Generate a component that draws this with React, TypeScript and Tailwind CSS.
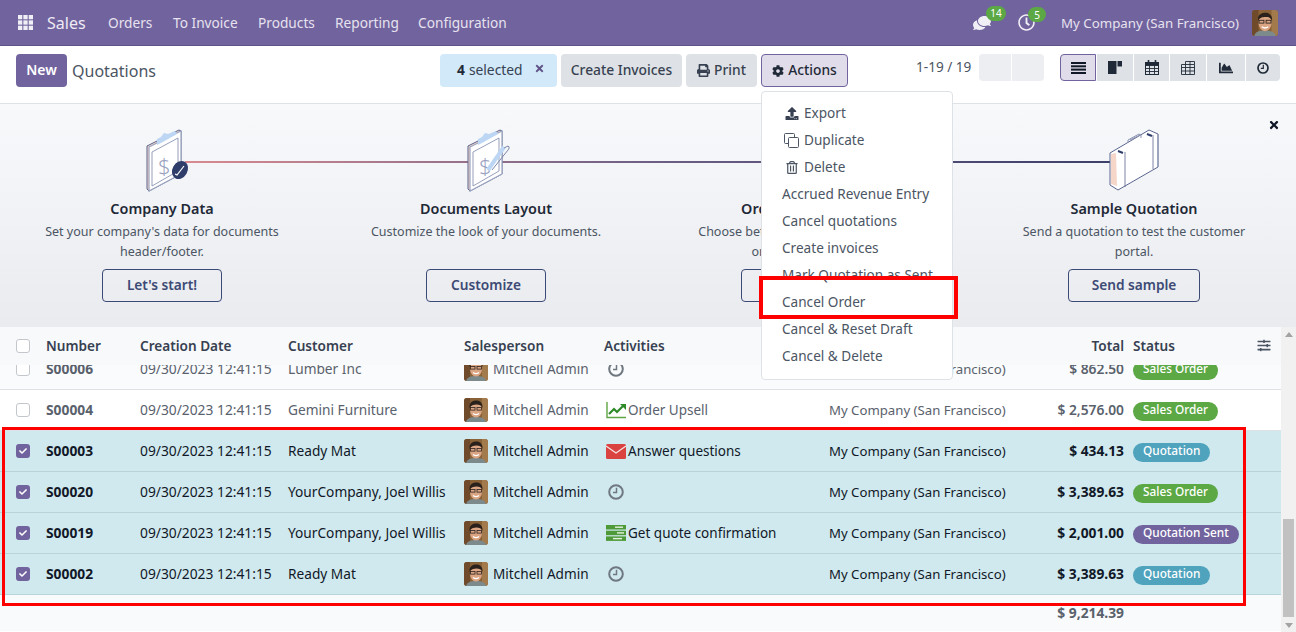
import { FaComments, FaPrint, FaCog, FaUpload, FaRegTrashAlt, FaRegClock, FaSlidersH, FaChartArea, FaTimes, FaCheck } from 'react-icons/fa';

type Row = {
  number: string;
  customer: string;
  activity: 'clock' | 'upsell' | 'mail' | 'todo';
  note?: string;
  total: string;
  status: 'Sales Order' | 'Quotation' | 'Quotation Sent';
  selected?: boolean;
};

const rows: Row[] = [
  { number: 'S00004', customer: 'Gemini Furniture', activity: 'upsell', note: 'Order Upsell', total: '$ 2,576.00', status: 'Sales Order' },
  { number: 'S00003', customer: 'Ready Mat', activity: 'mail', note: 'Answer questions', total: '$ 434.13', status: 'Quotation', selected: true },
  { number: 'S00020', customer: 'YourCompany, Joel Willis', activity: 'clock', total: '$ 3,389.63', status: 'Sales Order', selected: true },
  { number: 'S00019', customer: 'YourCompany, Joel Willis', activity: 'todo', note: 'Get quote confirmation', total: '$ 2,001.00', status: 'Quotation Sent', selected: true },
  { number: 'S00002', customer: 'Ready Mat', activity: 'clock', total: '$ 3,389.63', status: 'Quotation', selected: true },
];

const menuItems = ['Accrued Revenue Entry', 'Cancel quotations', 'Create invoices', 'Mark Quotation as Sent', 'Cancel Order', 'Cancel & Reset Draft', 'Cancel & Delete'];

const gridCols = 'grid grid-cols-[46px_94px_148px_176px_140px_225px_195px_100px_157px] items-center';

function Avatar({ size }: { size: string }) {
  return (
    <svg viewBox="0 0 24 24" className={`${size} rounded-[3px] shrink-0`}>
      <rect width="24" height="24" fill="#8a6238" />
      <rect x="0" y="0" width="6" height="24" fill="#6f4b2b" />
      <rect x="18" y="0" width="6" height="24" fill="#a27a4c" />
      <path d="M2 24c1-4 5-5 10-5s9 1 10 5z" fill="#7d8a8c" />
      <ellipse cx="12" cy="12" rx="6" ry="7.5" fill="#dba583" />
      <path d="M5.5 10C5 4 9 2.5 12.500 2.500S19 5 18.500 10c-1-3-3-3.500-6-3.500S7 7 5.500 10z" fill="#2a211c" />
      <rect x="6.500" y="9.500" width="4.500" height="2.600" fill="none" stroke="#2b2320" strokeWidth=".8" />
      <rect x="13" y="9.500" width="4.500" height="2.600" fill="none" stroke="#2b2320" strokeWidth=".8" />
      <path d="M9 15.500c2 1.500 4 1.500 6 0" stroke="#fff" strokeWidth="1.200" fill="none" />
    </svg>
  );
}

function Checkbox({ checked }: { checked?: boolean }) {
  if (checked) {
    return (
      <span className="flex h-[14px] w-[14px] items-center justify-center rounded-[3px] bg-[#71639e] text-white">
        <FaCheck className="h-[8px] w-[8px]" />
      </span>
    );
  }
  return <span className="block h-[14px] w-[14px] rounded-[3px] border border-[#c3c7cc] bg-white" />;
}

function ActivityIcon({ kind }: { kind: Row['activity'] }) {
  if (kind === 'upsell') {
    return (
      <svg viewBox="0 0 21 18" className="h-[18px] w-[21px]">
        <path d="M1 1v15.500h19" fill="none" stroke="#5ea545" strokeWidth="1.400" />
        <path d="M3 13l5-5 3 3 6-6" fill="none" stroke="#2f8a2a" strokeWidth="2.200" />
        <path d="M14 3h6v6z" fill="#2f8a2a" />
      </svg>
    );
  }
  if (kind === 'mail') {
    return (
      <svg viewBox="0 0 20 15" className="h-[15px] w-[20px]">
        <rect width="20" height="15" rx="1.500" fill="#d9423f" />
        <path d="M0 2l10 7 10-7" fill="none" stroke="#f5e3e3" strokeWidth="1.300" />
      </svg>
    );
  }
  if (kind === 'todo') {
    return (
      <svg viewBox="0 0 20 16" className="h-[16px] w-[20px]">
        <rect width="20" height="4.500" fill="#4f9a38" />
        <rect y="5.700" width="20" height="4.500" fill="#4f9a38" />
        <rect y="11.400" width="20" height="4.500" fill="#4f9a38" />
        <rect x="9" y="1.500" width="8" height="1.400" fill="#e4f1de" />
        <rect x="11" y="7.200" width="7" height="1.400" fill="#e4f1de" />
        <rect x="7" y="12.900" width="9" height="1.400" fill="#e4f1de" />
      </svg>
    );
  }
  return (
    <svg viewBox="0 0 16 16" className="h-[16px] w-[16px]" fill="none" stroke="#6f7780">
      <circle cx="8" cy="8" r="6.800" strokeWidth="2" />
      <path d="M8.500 3.800v4.700H5" strokeWidth="1.500" />
    </svg>
  );
}

function ActivityCell({ kind, note }: { kind: Row['activity']; note?: string }) {
  return (
    <div className="flex items-center whitespace-nowrap">
      <span className="flex w-[24px] shrink-0 justify-center">
        <ActivityIcon kind={kind} />
      </span>
      {note && <span className="text-[13.5px]">{note}</span>}
    </div>
  );
}

function StatusBadge({ status }: { status: Row['status'] }) {
  const color = status === 'Sales Order' ? 'bg-[#5ba845]' : status === 'Quotation' ? 'bg-[#4fa3bd]' : 'bg-[#71639e]';
  return (
    <span className={`inline-flex h-[19px] items-center rounded-full px-[10px] pb-[2px] text-[11.8px] font-medium leading-none text-white ${color}`}>
      {status}
    </span>
  );
}

function Clipboard({ pen, check }: { pen?: boolean; check?: boolean }) {
  return (
    <svg viewBox="0 0 64 66" className="relative h-[66px] w-[64px]">
      <path d="M14 18L46 2l2 1v43L16 63l-2-2z" fill="#f6d6c8" stroke="#56638f" strokeWidth="1" />
      <path d="M16 19L48 3v43L16 63z" fill="#fff" stroke="#9aa3bf" strokeWidth="1.200" />
      <path d="M19 24L45 10v33L19 58z" fill="#fff" stroke="#7b86aa" strokeWidth=".8" />
      <path d="M24 17v-6l4-2 3-4 4 1 7-3 2 3-16 9z" fill="#bcd6f3" />
      <text x="25" y="46" fontSize="22" fontWeight="300" fill="#9aa3bf" fontFamily="'Noto Sans', sans-serif">$</text>
      {pen && (
        <>
          <path d="M34 42L50 19" stroke="#bcd6f3" strokeWidth="4" />
          <path d="M50 20l4-2c2 1 1 3 0 4L38 42" fill="none" stroke="#7b86aa" strokeWidth="1" />
        </>
      )}
      {check && (
        <>
          <ellipse cx="47" cy="42" rx="7.500" ry="9.500" transform="rotate(30 47 42)" fill="#2f3d6b" />
          <path d="M42 46l2 1 7-9" fill="none" stroke="#fff" strokeWidth="1.200" />
        </>
      )}
    </svg>
  );
}

function Briefcase() {
  return (
    <svg viewBox="0 0 64 66" className="relative h-[66px] w-[64px]">
      <path d="M8 25L47 2l9 4v33L16 62l-8-5z" fill="#fff" stroke="#5a6690" strokeWidth="1" />
      <path d="M9 26l5-1 1 33-6-2z" fill="#f6d6c8" />
      <path d="M23 24v35M51 7v34" stroke="#5a6690" strokeWidth=".8" />
      <path d="M26 15v-3l11-6 2 1v3M28 12l10-5" fill="none" stroke="#8b94b3" strokeWidth="1" />
      <path d="M16 23l5 2M45 6l5 2" stroke="#2f3d6b" strokeWidth="2" />
      <path d="M56 6v33" stroke="#98a1bd" strokeWidth="1.500" />
    </svg>
  );
}

function OnboardingStep({ title, lines, action, width, icon }: { title: string; lines: string[]; action: string; width: string; icon: React.ReactNode }) {
  return (
    <div className="flex flex-col items-center">
      <div className="mt-[24px] h-[66px]">{icon}</div>
      <h3 className="mt-[5px] text-[14.4px] font-semibold leading-[20px] text-[#1f2937]">{title}</h3>
      <p className="mt-[3px] min-h-[40px] text-center text-[12.5px] leading-[20px] text-[#4b5563]">
        {lines.map((l) => (
          <span key={l} className="block">{l}</span>
        ))}
      </p>
      <button className={`mt-[7px] h-[33px] rounded-[4px] border border-[#3d4a75] bg-transparent pb-px text-[13.7px] font-semibold text-[#3d4a75] ${width}`}>
        {action}
      </button>
    </div>
  );
}

function ListRow({ row }: { row: Row }) {
  const text = row.selected ? 'text-[#111827]' : 'text-[#59616c]';
  return (
    <div className={`${gridCols} h-[41px] border-b text-[13.8px] ${text} ${row.selected ? 'border-[#b9d3da] bg-[#d0e9ef]' : 'border-[#dee2e6] bg-white'}`}>
      <div className="pl-[16px]"><Checkbox checked={row.selected} /></div>
      <div className="font-bold">{row.number}</div>
      <div>09/30/2023 12:41:15</div>
      <div className="whitespace-nowrap text-[13.7px]">{row.customer}</div>
      <div className="flex items-center gap-[5px]">
        <Avatar size="h-[24px] w-[24px]" />
        <span className="text-[13.6px]">Mitchell Admin</span>
      </div>
      <ActivityCell kind={row.activity} note={row.note} />
      <div className="whitespace-nowrap pt-px text-[13.2px]">My Company (San Francisco)</div>
      <div className={`text-right ${row.selected ? 'font-bold' : 'font-semibold'}`}>{row.total}</div>
      <div className="pl-[9px]"><StatusBadge status={row.status} /></div>
    </div>
  );
}

export default function App() {
  return (
    <div className="relative flex h-[632px] w-[1296px] flex-col overflow-hidden bg-white font-['Noto_Sans',sans-serif] text-[14px] text-[#374151]">
      {/* Navbar */}
      <header className="flex h-[46px] shrink-0 items-center border-b border-[#5f5388] bg-[#71639e] text-white">
        <svg viewBox="0 0 14 14" className="ml-[18px] h-[15px] w-[15px]" fill="#f1eff6">
          {[0, 5, 10].map((y) => [0, 5, 10].map((x) => <rect key={`${x}-${y}`} x={x} y={y} width="4" height="4" />))}
        </svg>
        <span className="ml-[14px] w-[61px] text-[16px] text-[#eeebf4]">Sales</span>
        <nav className="flex pt-[2px] text-[13.7px] text-[#e6e2ef]">
          <span className="w-[65px]">Orders</span>
          <span className="w-[85px]">To Invoice</span>
          <span className="w-[77px]">Products</span>
          <span className="w-[83px]">Reporting</span>
          <span>Configuration</span>
        </nav>
        <div className="ml-auto flex items-center">
          <div className="relative mr-[27px] h-[18px] w-[18px]">
            <FaComments className="h-[18px] w-[18px] scale-x-[-1] text-[#f1eff6]" />
            <span className="absolute left-[13px] top-[-8px] flex h-[15px] w-[20px] items-center justify-center rounded-full bg-[#5ba845] text-[10px] leading-none">14</span>
          </div>
          <div className="relative mr-[26px] h-[17px] w-[17px]">
            <FaRegClock className="h-[17px] w-[17px] text-[#f1eff6]" />
            <span className="absolute left-[10px] top-[-7px] flex h-[15px] w-[18px] items-center justify-center rounded-full bg-[#5ba845] text-[10px] leading-none">5</span>
          </div>
          <span className="w-[191px] whitespace-nowrap pt-[2px] text-[13.3px] text-[#e6e2ef]">My Company (San Francisco)</span>
          <div className="mr-[18px]"><Avatar size="h-[26px] w-[26px]" /></div>
        </div>
      </header>

      {/* Control panel */}
      <div className="flex h-[58px] shrink-0 border-b border-[#dee2e6] pt-[8px]">
        <div className="flex w-[440px] pl-[16px]">
          <button className="h-[33px] w-[51px] rounded-[4px] bg-[#71639e] pb-[2px] text-[14px] font-semibold text-white">New</button>
          <span className="ml-[5px] mt-[5px] text-[16px] leading-[24px] text-[#4b5563]">Quotations</span>
        </div>
        <div className="flex w-[476px] gap-[4px] text-[13.8px] font-medium">
          <div className="flex h-[33px] w-[117px] items-center rounded-[4px] bg-[#d1e9f8] pb-px pl-[17px]">
            <span className="font-bold text-[#1f2937]">4</span>
            <span className="ml-[4px] font-normal text-[#374151]">selected</span>
            <FaTimes className="mb-[3px] ml-[11px] h-[11px] w-[11px] text-[#5f5388]" />
          </div>
          <button className="h-[33px] w-[121px] rounded-[4px] bg-[#dee1e5] pb-px text-[#374151]">Create Invoices</button>
          <button className="flex h-[33px] w-[71px] items-center justify-center gap-[4px] rounded-[4px] bg-[#dee1e5] text-[#374151]">
            <FaPrint className="h-[13px] w-[13px]" /><span className="pb-px">Print</span>
          </button>
          <button className="flex h-[33px] w-[87px] items-center justify-center gap-[4px] rounded-[4px] border border-[#71639e] bg-[#e0dce9] text-[#1f2937]">
            <FaCog className="h-[12px] w-[12px]" /><span className="pb-px">Actions</span>
          </button>
        </div>
        <div className="flex w-[144px]">
          <span className="mt-[2px] w-[63px] text-[13.6px] leading-[22px] text-[#4b5563]">1-19 / 19</span>
          <div className="flex h-[27px] gap-px">
            <span className="w-[32px] rounded-l-[4px] bg-[#eceef1]" />
            <span className="w-[32px] rounded-r-[4px] bg-[#eceef1]" />
          </div>
        </div>
        <div className="flex h-[27px] gap-px text-[#1f2937]">
          <span className="flex w-[36px] items-center justify-center rounded-l-[4px] border border-[#71639e] bg-[#e0dce9]">
            <svg viewBox="0 0 15 12" className="h-[12px] w-[15px]" fill="#111827">
              <rect width="15" height="2" /><rect y="3.300" width="15" height="2" /><rect y="6.600" width="15" height="2" /><rect y="10" width="15" height="2" />
            </svg>
          </span>
          <span className="flex w-[36px] items-center justify-center bg-[#dee2e6]">
            <svg viewBox="0 0 14 13" className="h-[13px] w-[14px]" fill="#1f2937">
              <rect width="8.500" height="13" /><rect x="9.500" width="4.500" height="5.500" />
            </svg>
          </span>
          <span className="flex w-[35px] items-center justify-center bg-[#dee2e6]">
            <svg viewBox="0 0 14 15" className="h-[15px] w-[14px]" fill="none" stroke="#1f2937">
              <rect x=".5" y="2.500" width="13" height="12" fill="#dee2e6" />
              <path d="M.5 5.500h13M.5 8.500h13M.5 11.500h13M4.500 5.500v9M9.500 5.500v9" strokeWidth=".9" />
              <path d="M3.500 0v3.500M10.500 0v3.500" strokeWidth="1.600" />
              <rect x=".5" y="2.500" width="13" height="2.500" fill="#1f2937" />
            </svg>
          </span>
          <span className="flex w-[36px] items-center justify-center bg-[#dee2e6]">
            <svg viewBox="0 0 14 14" className="h-[14px] w-[14px]" fill="none" stroke="#1f2937">
              <path d="M.5 3.500h13v10H.5zM4.500.5h9v3M.5 6.500h13M.5 10h13M4.500 .5v13M9 .5v13" strokeWidth=".9" />
            </svg>
          </span>
          <span className="flex w-[38px] items-center justify-center bg-[#dee2e6]"><FaChartArea className="h-[14px] w-[16px]" /></span>
          <span className="flex w-[34px] items-center justify-center rounded-r-[4px] bg-[#dee2e6]">
            <svg viewBox="0 0 12 12" className="h-[12px] w-[12px]" fill="none" stroke="#1f2937">
              <circle cx="6" cy="6" r="5" strokeWidth="1.700" />
              <path d="M6.300 2.800v3.500H3.800" strokeWidth="1.200" />
            </svg>
          </span>
        </div>
      </div>

      {/* Onboarding panel */}
      <section className="relative grid h-[223px] shrink-0 grid-cols-4 bg-gradient-to-b from-[#f8f9fb] to-[#e9ebef]">
        <div className="absolute left-[185px] top-[57px] h-[2px] w-[925px] bg-gradient-to-r from-[#d98a8f] via-[#6d5f85] to-[#3d3f6b]" />
        <FaTimes className="absolute left-[1268px] top-[15px] h-[12px] w-[12px] text-[#111827]" />
        <OnboardingStep title="Company Data" lines={["Set your company's data for documents", 'header/footer.']} action="Let's start!" width="w-[120px]" icon={<span className="block pl-[6px]"><Clipboard check /></span>} />
        <OnboardingStep title="Documents Layout" lines={['Customize the look of your documents.']} action="Customize" width="w-[120px]" icon={<Clipboard pen />} />
        <OnboardingStep title="Order Confirmation" lines={['Choose between electronic signatures', 'or online payments.']} action="Let's do it!" width="w-[138px]" icon={<Clipboard />} />
        <OnboardingStep title="Sample Quotation" lines={['Send a quotation to test the customer', 'portal.']} action="Send sample" width="w-[132px]" icon={<Briefcase />} />
      </section>

      {/* List */}
      <div className="flex min-h-0 flex-1">
        <div className="flex w-[1281px] flex-col">
          <div className={`${gridCols} h-[38px] shrink-0 bg-[#f8f9fb] text-[13.6px] font-semibold text-[#374151]`}>
            <div className="pl-[16px]"><Checkbox /></div>
            <div>Number</div>
            <div>Creation Date</div>
            <div>Customer</div>
            <div>Salesperson</div>
            <div>Activities</div>
            <div />
            <div className="text-right">Total</div>
            <div className="flex items-center justify-between pl-[9px] pr-[10px]">
              <span>Status</span>
              <FaSlidersH className="h-[13px] w-[14px] text-[#4b5563]" />
            </div>
          </div>
          <div className="flex-1 overflow-hidden">
            <div className="-mt-[16px]">
              <div className={`${gridCols} h-[41px] border-b border-[#dee2e6] bg-[#fafbfc] text-[13.8px] text-[#59616c]`}>
                <div className="pl-[16px]"><Checkbox /></div>
                <div className="font-bold">S00006</div>
                <div>09/30/2023 12:41:15</div>
                <div className="text-[13.7px]">Lumber Inc</div>
                <div className="flex items-center gap-[5px]">
                  <Avatar size="h-[24px] w-[24px]" />
                  <span className="text-[13.6px]">Mitchell Admin</span>
                </div>
                <ActivityCell kind="clock" />
                <div className="pt-px text-[13.2px]">My Company (San Francisco)</div>
                <div className="text-right font-semibold">$ 862.50</div>
                <div className="pl-[9px]"><StatusBadge status="Sales Order" /></div>
              </div>
              {rows.map((r) => <ListRow key={r.number} row={r} />)}
            </div>
            <div className={`${gridCols} h-[36px] bg-[#f9fafb]`}>
              <div className="col-start-8 text-right text-[13.8px] font-bold text-[#59616c]">$ 9,214.39</div>
            </div>
          </div>
        </div>
        {/* Scrollbar */}
        <div className="flex w-[15px] flex-col items-center bg-[#f1f1f1]">
          <span className="mt-[5px] h-0 w-0 border-x-[4px] border-b-[5px] border-x-transparent border-b-[#a3a3a3]" />
          <span className="mt-[182px] h-[98px] w-[11px] bg-[#c1c1c1]" />
          <span className="mt-[6px] h-0 w-0 border-x-[4px] border-t-[5px] border-x-transparent border-t-[#a3a3a3]" />
        </div>
      </div>

      {/* Actions dropdown */}
      <div className="absolute left-[761px] top-[91px] w-[192px] rounded-[4px] border border-[#dee2e6] bg-white pb-[9px] pt-[8px] text-[13.6px] text-[#4b5563]">
        <div className="flex h-[27px] items-center pl-[23px]"><FaUpload className="h-[13px] w-[14px] text-[#374151]" /><span className="ml-[5px] pb-px">Export</span></div>
        <div className="flex h-[27px] items-center pl-[22px]">
          <svg viewBox="0 0 15 15" className="h-[15px] w-[15px]" fill="#fff" stroke="#4b5563">
            <rect x=".5" y=".5" width="10" height="10" rx="1" />
            <rect x="4.500" y="4.500" width="10" height="10" rx="1" />
          </svg>
          <span className="ml-[5px] pb-px">Duplicate</span>
        </div>
        <div className="flex h-[27px] items-center pl-[24px]"><FaRegTrashAlt className="h-[13px] w-[12px]" /><span className="ml-[6px] pb-px">Delete</span></div>
        {menuItems.map((m) => (
          <div key={m} className="flex h-[27px] items-center whitespace-nowrap pb-px pl-[20px]">{m}</div>
        ))}
      </div>

      {/* Annotation boxes */}
      <div className="absolute left-[759px] top-[276px] h-[43px] w-[199px] border-[4px] border-[#ff0000]" />
      <div className="absolute left-[2px] top-[427px] h-[179px] w-[1244px] border-[3px] border-[#ff0000]" />
    </div>
  );
}
